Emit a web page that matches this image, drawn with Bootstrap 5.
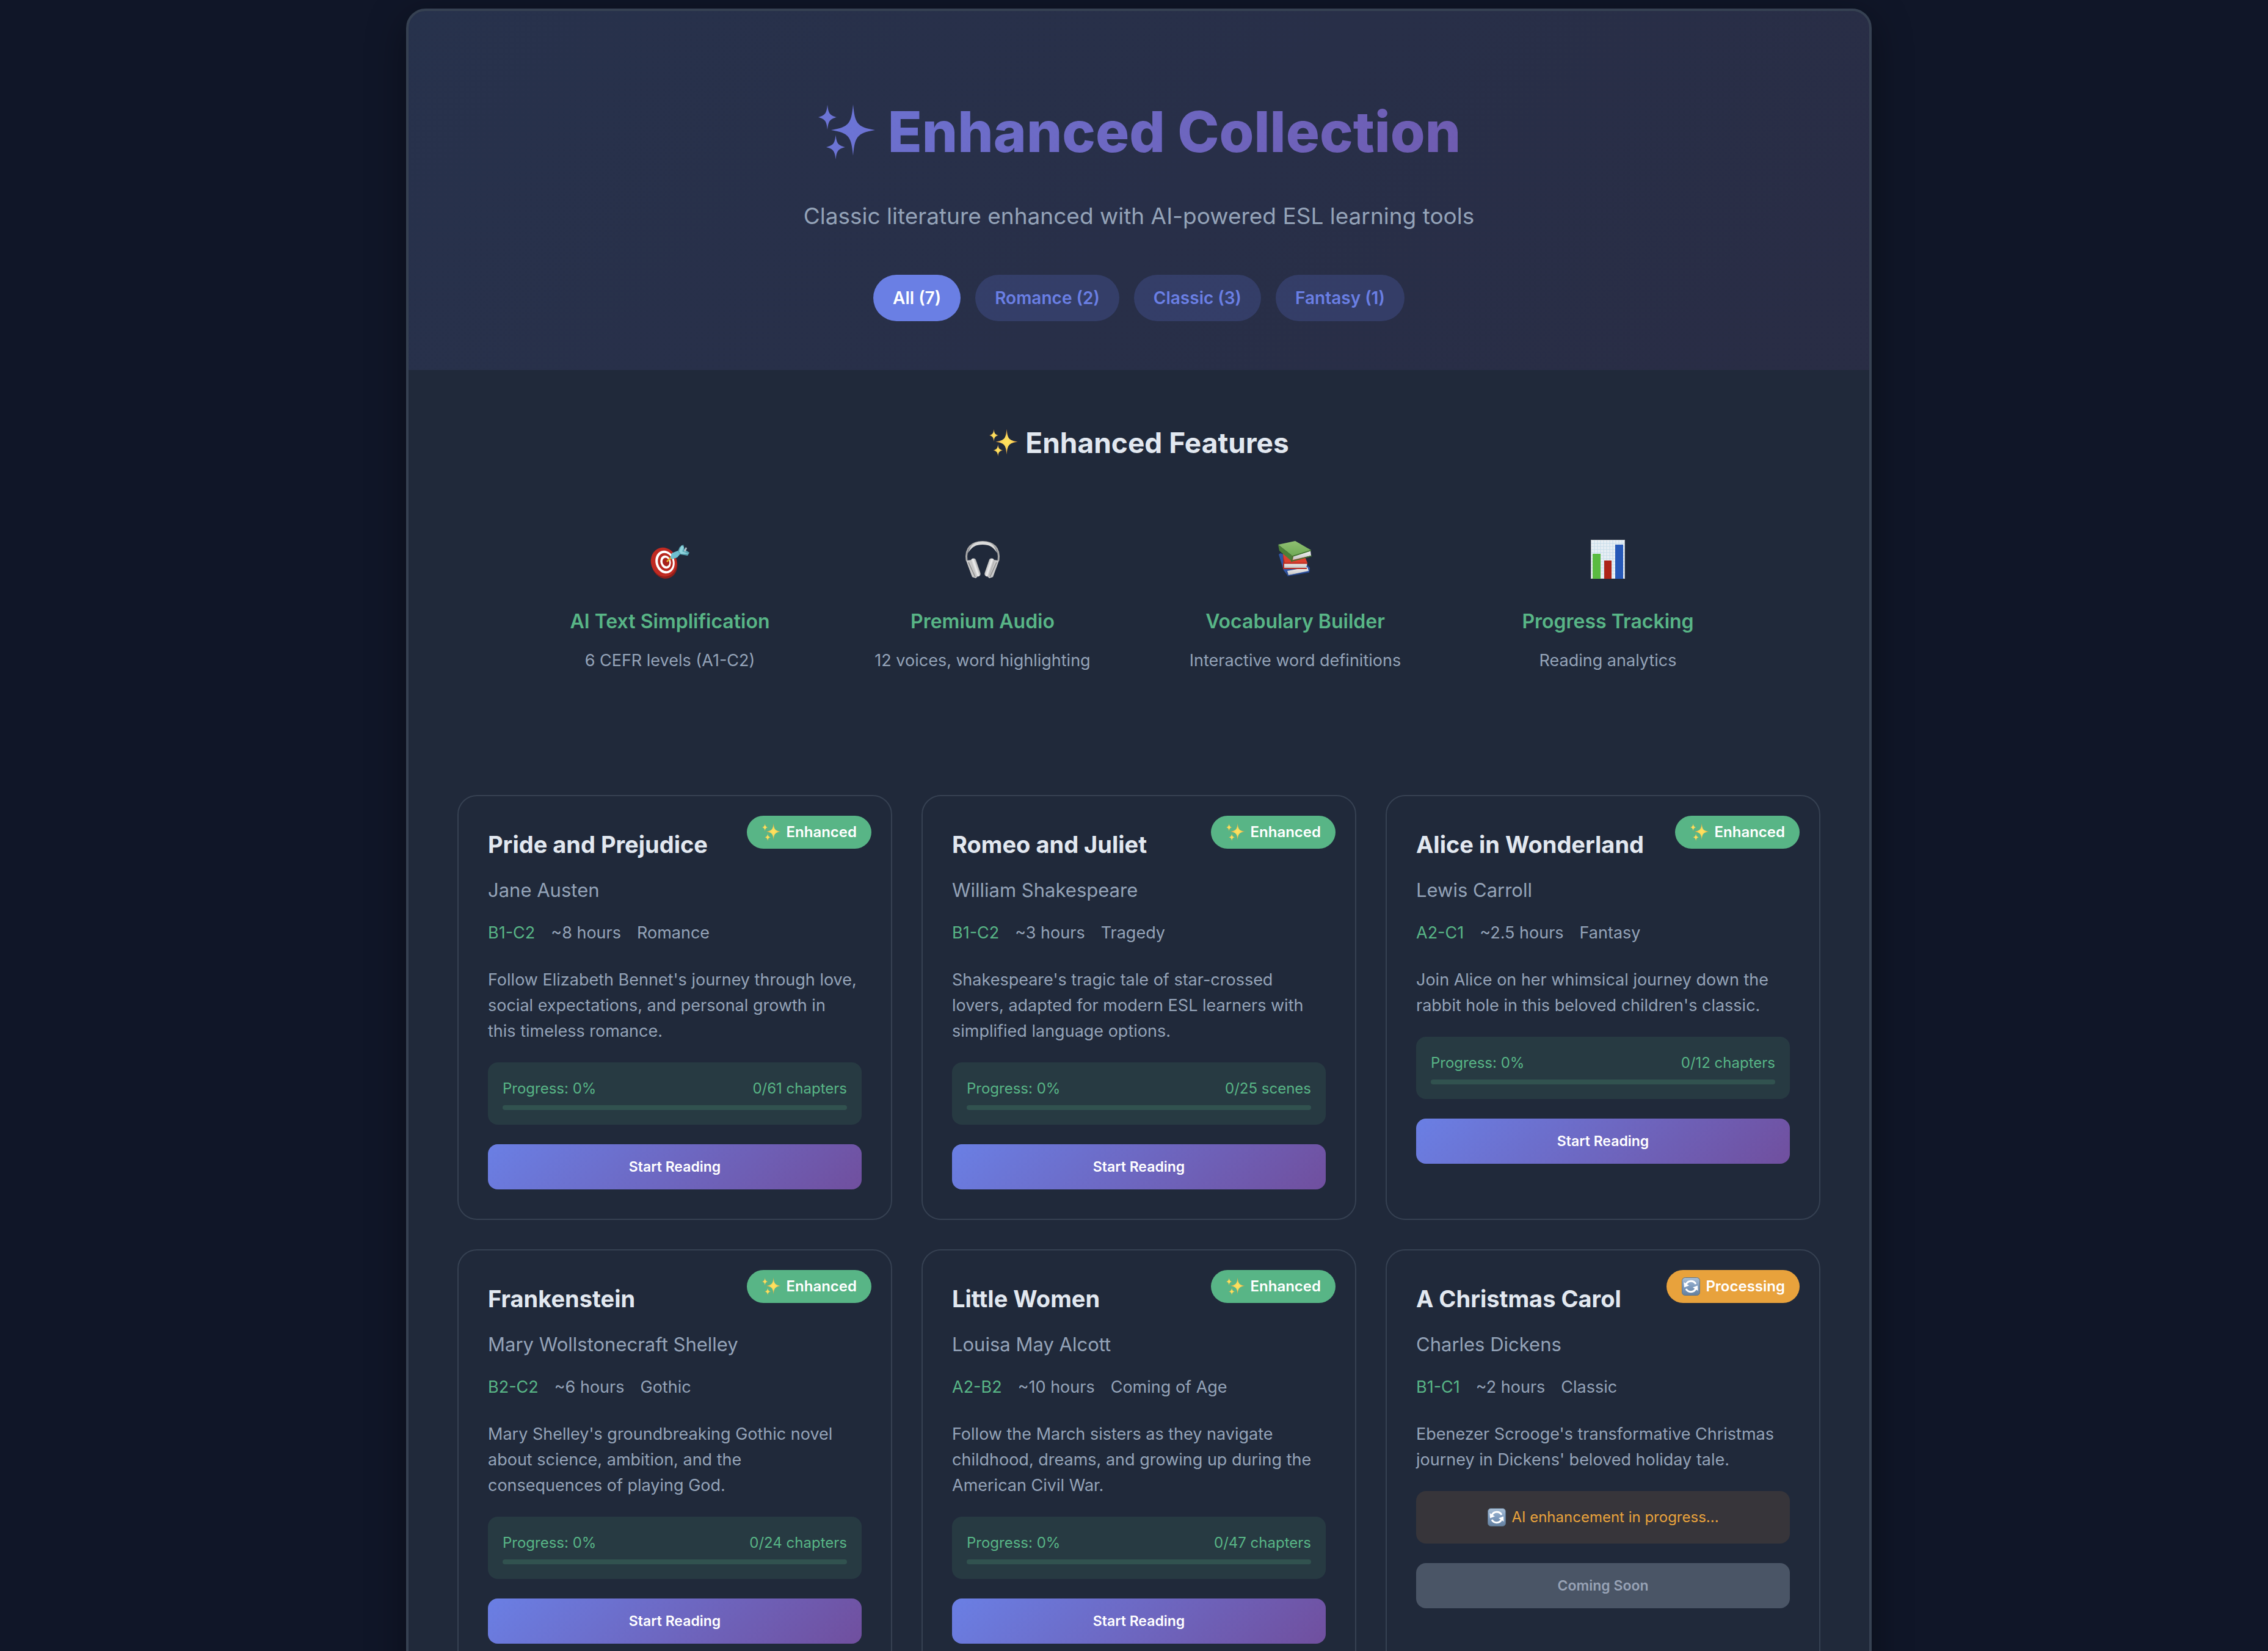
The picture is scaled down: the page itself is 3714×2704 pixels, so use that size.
<!DOCTYPE html>
<html lang="en">
<head>
<meta charset="utf-8">
<meta name="viewport" content="width=device-width, initial-scale=1">
<title>Enhanced Collection</title>
<link rel="stylesheet" href="https://cdn.jsdelivr.net/npm/bootstrap@5.3.0/dist/css/bootstrap.min.css">
<style>
:root{--ink:#e2e8f0;--muted:#94a3b8;--panel:#20293a;--line:#364152;--green:#58b586;--amber:#e8a23c;--blue:#6a7fe4;--violet:#704f9e}
body{background:#101628;color:var(--muted);font-family:Inter,"Liberation Sans",sans-serif;height:100vh;overflow:hidden;padding:14px 0 0 16px}
.shell{max-width:2400px;background:var(--panel);border:4px solid var(--line);border-radius:32px;box-shadow:0 16px 64px rgba(0,0,0,.4);overflow:hidden}
.hero{padding:140px 80px 80px;background:linear-gradient(135deg,rgba(102,126,234,.1),rgba(118,75,162,.1))}
.hero-title{font-size:92px;line-height:116px;font-weight:800;margin-bottom:48px;gap:20px;background:linear-gradient(135deg,var(--blue),var(--violet));-webkit-background-clip:text;background-clip:text;color:transparent}
.hero-title svg{width:96px;height:96px}
.hero-sub{font-size:37px;line-height:64px;margin-bottom:64px}
.pill{border:0;border-radius:40px;padding:20px 32px;font-size:28px;line-height:36px;font-weight:600;color:var(--blue);background:rgba(102,126,234,.2)}
.pill.on{color:#fff;background:var(--blue)}
.section-pad{padding:80px}
.feat-head{font-size:46px;line-height:78px;font-weight:700;color:var(--ink);gap:12px;margin-bottom:120px}
.feat-head svg{width:48px;height:48px}
.feat-grid{max-width:2000px;gap:48px;margin-bottom:198px}
.feat-grid svg{width:64px;height:64px}
.feat-name{font-size:32px;line-height:48px;font-weight:600;color:var(--green);margin:46px 0 18px}
.feat-note{font-size:27px;line-height:44px}
.shelf{display:grid;grid-template-columns:repeat(3,minmax(0,1fr));gap:48px}
.book{border:2px solid var(--line);border-radius:32px;padding:48px}
.tag{top:32px;right:32px;border-radius:27px;padding:8px 24px;font-size:24px;line-height:38px;font-weight:600;color:#fff;background:var(--green);gap:8px}
.tag.wait{background:var(--amber)}
.tag svg,.queue svg{width:32px;height:32px}
.book-title{font-size:38px;line-height:62px;font-weight:700;color:var(--ink);margin-bottom:20px}
.author{font-size:31px;line-height:48px;margin-bottom:24px}
.facts{font-size:27px;line-height:44px;gap:26px;margin-bottom:34px}
.level{color:var(--green)}
.blurb{font-size:27px;line-height:42px;margin-bottom:30px}
.meter,.queue{border-radius:16px;padding:24px;font-size:24px;line-height:38px;margin-bottom:32px}
.meter{background:rgba(88,181,134,.12);color:var(--green)}
.queue{background:#37353a;color:var(--amber);gap:8px}
.track{height:8px;border-radius:4px;background:rgba(88,181,134,.2);margin-top:8px}
.go{border:0;border-radius:16px;padding:24px;font-size:23px;line-height:26px;font-weight:600;color:#fff;background:linear-gradient(135deg,var(--blue),var(--violet))}
.go:disabled{background:#4a5566;color:#97a2b5}
</style>
<script src="https://cdn.jsdelivr.net/npm/bootstrap@5.3.0/dist/js/bootstrap.bundle.min.js"></script>
</head>
<body>
<svg class="position-absolute" width="0" height="0" aria-hidden="true">
  <defs>
    <linearGradient id="gHero" x1="0" y1="0" x2="1" y2="1"><stop offset="0" stop-color="#6b77d9"/><stop offset="1" stop-color="#6c70d0"/></linearGradient>
    <radialGradient id="gGold"><stop offset="0" stop-color="#ffe45e"/><stop offset=".45" stop-color="#fbd75a"/><stop offset="1" stop-color="#d98f3c"/></radialGradient>
    <linearGradient id="gSync" x1="0" y1="0" x2="0" y2="1"><stop offset="0" stop-color="#a9bfd6"/><stop offset=".5" stop-color="#7f9cbf"/><stop offset="1" stop-color="#64809f"/></linearGradient>
    <linearGradient id="gCup" x1="0" y1="0" x2="1" y2="0"><stop offset="0" stop-color="#bdbdbd"/><stop offset=".5" stop-color="#f0f0f0"/><stop offset="1" stop-color="#a9a9a9"/></linearGradient>
    <linearGradient id="gLeaf" x1="0" y1="0" x2="0" y2="1"><stop offset="0" stop-color="#8fc071"/><stop offset="1" stop-color="#6fa955"/></linearGradient>
    <linearGradient id="gPage" x1="0" y1="0" x2="0" y2="1"><stop offset="0" stop-color="#f5f5f5"/><stop offset="1" stop-color="#c3c3c3"/></linearGradient>
  </defs>
  <symbol id="sparkles" viewBox="0 0 96 96">
    <path d="M59 3C62 34 65 40 95 45C65 50 62 56 59 87C56 56 53 50 23 45C53 40 56 34 59 3Z"/>
    <path d="M17 3.500C18.500 18 21 21 32 24C21 27 18.500 30 17 44.500C15.500 30 13 27 2 24C13 21 15.500 18 17 3.500Z"/>
    <path d="M30.500 53C32 67 34.500 70 46 73C34.500 76 32 79 30.500 93C29 79 26.500 76 15 73C26.500 70 29 67 30.500 53Z"/>
  </symbol>
  <symbol id="sync" viewBox="0 0 32 32">
    <rect x="1.500" y="1.500" width="29" height="29" rx="5" fill="url(#gSync)" stroke="#5f7488"/>
    <g fill="none" stroke="#fff" stroke-width="3"><path d="M8 12.500A9 9 0 0 1 24 12"/><path d="M24 19.500A9 9 0 0 1 8 20"/></g>
    <path fill="#fff" d="M4.500 9L5 17.500L13 14.500ZM27.500 23L27 14.500L19 17.500Z"/>
  </symbol>
</svg>

<main class="shell mx-auto">
  <header class="hero text-center">
    <h1 class="hero-title d-flex justify-content-center align-items-center"><svg fill="url(#gHero)" aria-hidden="true"><use href="#sparkles"/></svg>Enhanced Collection</h1>
    <p class="hero-sub">Classic literature enhanced with AI-powered ESL learning tools</p>
    <div class="d-flex justify-content-center gap-4">
      <button type="button" class="pill on">All (7)</button>
      <button type="button" class="pill">Romance (2)</button>
      <button type="button" class="pill">Classic (3)</button>
      <button type="button" class="pill">Fantasy (1)</button>
    </div>
  </header>

  <div class="section-pad">
    <h2 class="feat-head d-flex justify-content-center align-items-center"><svg fill="url(#gGold)" aria-hidden="true"><use href="#sparkles"/></svg>Enhanced Features</h2>
    <div class="feat-grid d-flex mx-auto text-center">
      <div class="flex-fill w-25">
        <svg class="d-block mx-auto" viewBox="0 0 64 64" aria-hidden="true">
          <ellipse cx="23" cy="39" rx="21" ry="25" transform="rotate(-16 23 39)" fill="#8f1f1a"/>
          <ellipse cx="22" cy="36.500" rx="21" ry="24" transform="rotate(-16 22 36.500)" fill="#c02a22"/>
          <ellipse cx="24" cy="36.500" rx="15.500" ry="19" transform="rotate(-16 24 36.500)" fill="#fff"/>
          <ellipse cx="24.500" cy="36.500" rx="12" ry="15" transform="rotate(-16 24.500 36.500)" fill="#b8281f"/>
          <ellipse cx="25" cy="36.500" rx="8.500" ry="11" transform="rotate(-16 25 36.500)" fill="#fff"/>
          <ellipse cx="25.500" cy="36.500" rx="5.500" ry="7" transform="rotate(-16 25.500 36.500)" fill="#a8221c"/>
          <path d="M27 36L36 27" stroke="#e3b62d" stroke-width="2.500"/>
          <path d="M33 29L35 22L45 18L50 22L44 29L35 32Z" fill="#6fc0cf"/>
          <path d="M45 19L48 12L54 8L56 16L64 21L61 26L49 24Z" fill="#5aa7b5"/>
          <path d="M47 19L51 9L55 12L52 19L62 23L50 23Z" fill="#8fd5de"/><path d="M55 18L58 12L60 14L57 20Z" fill="#b8c4cc"/>
        </svg>
        <h3 class="feat-name">AI Text Simplification</h3><p class="feat-note mb-0">6 CEFR levels (A1-C2)</p>
      </div>
      <div class="flex-fill w-25">
        <svg class="d-block mx-auto" viewBox="0 0 64 64" aria-hidden="true">
          <path d="M6 34C3 13 15 3.500 32 3.500S61 13 58 34" fill="none" stroke="#a8a8a8" stroke-width="3"/>
          <path d="M8 22C12 8 20 3 32 3S52 8 56 22C49 11 43 8 32 8S15 11 8 22Z" fill="#dadada"/>
          <path d="M5 34L14 33L24 60L21 63L15 61Z" fill="#c9c9c9"/><path d="M59 34L50 33L40 60L43 63L49 61Z" fill="#c9c9c9"/>
          <rect x="16" y="30" width="9" height="31" rx="4.500" transform="rotate(-19 20 45)" fill="url(#gCup)"/>
          <rect x="39" y="30" width="9" height="31" rx="4.500" transform="rotate(19 44 45)" fill="url(#gCup)"/>
          <path d="M9 37L20 61M55 37L44 61" stroke="#8d8d8d" stroke-width="1.500"/>
        </svg>
        <h3 class="feat-name">Premium Audio</h3><p class="feat-note mb-0">12 voices, word highlighting</p>
      </div>
      <div class="flex-fill w-25">
        <svg class="d-block mx-auto" viewBox="0 0 64 64" aria-hidden="true">
          <path d="M5 24L8 22L50 40L56 46L55 53L20 59L13 50Z" fill="#2f55a5"/>
          <path d="M19 51L52 45L54 51L21 58Z" fill="url(#gPage)"/><path d="M18 52L20 59L55 53" fill="none" stroke="#27468c" stroke-width="1.500"/>
          <path d="M12 23L48 28L52 38L13 39Z" fill="#dc4030"/><path d="M12 24L13 48L17 46L15 39Z" fill="#a52920"/>
          <path d="M14 39L52 38L50 46L14 46Z" fill="url(#gPage)"/><path d="M52 38.500H13V47H51" fill="none" stroke="#b92e24" stroke-width="1.800"/>
          <path d="M4 8L32 2L58 17L28 27Z" fill="url(#gLeaf)"/><path d="M4 8L28 27L26 35L6 18Z" fill="#4b7f38"/>
          <path d="M29 27L57 18L58 26L28 33Z" fill="url(#gPage)"/><path d="M58 17.500L28 27L26 35L59 26.500" fill="none" stroke="#417330" stroke-width="1.800"/>
        </svg>
        <h3 class="feat-name">Vocabulary Builder</h3><p class="feat-note mb-0">Interactive word definitions</p>
      </div>
      <div class="flex-fill w-25">
        <svg class="d-block mx-auto" viewBox="0 0 64 64" aria-hidden="true">
          <rect x="4" width="56" height="64" fill="#eaf0f5"/>
          <path d="M5 6H59M5 11H59M5 16H59M5 21H59M5 26H59M5 31H59M5 36H59M5 41H59M5 46H59M5 51H59M5 56H59M10 1V63M15 1V63M20 1V63M25 1V63M30 1V63M35 1V63M40 1V63M45 1V63M50 1V63M55 1V63" stroke="#c6dcea"/>
          <rect x="4.500" y=".5" width="55" height="63" fill="none" stroke="#b9bcc2"/>
          <rect x="7" y="23" width="13" height="41" fill="#5abb41"/><rect x="26" y="34" width="12" height="30" fill="#ad2418"/><rect x="44" y="8" width="13" height="56" fill="#2759b8"/>
        </svg>
        <h3 class="feat-name">Progress Tracking</h3><p class="feat-note mb-0">Reading analytics</p>
      </div>
    </div>

    <div class="shelf">
      <article class="book position-relative">
        <span class="tag position-absolute d-flex align-items-center"><svg fill="url(#gGold)" aria-hidden="true"><use href="#sparkles"/></svg>Enhanced</span>
        <h3 class="book-title">Pride and Prejudice</h3>
        <p class="author">Jane Austen</p>
        <div class="facts d-flex"><span class="level">B1-C2</span><span>~8 hours</span><span>Romance</span></div>
        <p class="blurb">Follow Elizabeth Bennet's journey through love, social expectations, and personal growth in this&nbsp;timeless romance.</p>
        <div class="meter"><div class="d-flex justify-content-between"><span>Progress: 0%</span><span>0/61 chapters</span></div><div class="track"></div></div>
        <button type="button" class="go d-block w-100">Start Reading</button>
      </article>
      <article class="book position-relative">
        <span class="tag position-absolute d-flex align-items-center"><svg fill="url(#gGold)" aria-hidden="true"><use href="#sparkles"/></svg>Enhanced</span>
        <h3 class="book-title">Romeo and Juliet</h3>
        <p class="author">William Shakespeare</p>
        <div class="facts d-flex"><span class="level">B1-C2</span><span>~3 hours</span><span>Tragedy</span></div>
        <p class="blurb">Shakespeare's tragic tale of star-crossed lovers, adapted for modern ESL learners with simplified language options.</p>
        <div class="meter"><div class="d-flex justify-content-between"><span>Progress: 0%</span><span>0/25 scenes</span></div><div class="track"></div></div>
        <button type="button" class="go d-block w-100">Start Reading</button>
      </article>
      <article class="book position-relative">
        <span class="tag position-absolute d-flex align-items-center"><svg fill="url(#gGold)" aria-hidden="true"><use href="#sparkles"/></svg>Enhanced</span>
        <h3 class="book-title">Alice in Wonderland</h3>
        <p class="author">Lewis Carroll</p>
        <div class="facts d-flex"><span class="level">A2-C1</span><span>~2.5 hours</span><span>Fantasy</span></div>
        <p class="blurb">Join Alice on her whimsical journey down the rabbit hole in this beloved children's classic.</p>
        <div class="meter"><div class="d-flex justify-content-between"><span>Progress: 0%</span><span>0/12 chapters</span></div><div class="track"></div></div>
        <button type="button" class="go d-block w-100">Start Reading</button>
      </article>
      <article class="book position-relative">
        <span class="tag position-absolute d-flex align-items-center"><svg fill="url(#gGold)" aria-hidden="true"><use href="#sparkles"/></svg>Enhanced</span>
        <h3 class="book-title">Frankenstein</h3>
        <p class="author">Mary Wollstonecraft Shelley</p>
        <div class="facts d-flex"><span class="level">B2-C2</span><span>~6 hours</span><span>Gothic</span></div>
        <p class="blurb">Mary Shelley's groundbreaking Gothic novel about science, ambition, and the consequences&nbsp;of playing God.</p>
        <div class="meter"><div class="d-flex justify-content-between"><span>Progress: 0%</span><span>0/24 chapters</span></div><div class="track"></div></div>
        <button type="button" class="go d-block w-100">Start Reading</button>
      </article>
      <article class="book position-relative">
        <span class="tag position-absolute d-flex align-items-center"><svg fill="url(#gGold)" aria-hidden="true"><use href="#sparkles"/></svg>Enhanced</span>
        <h3 class="book-title">Little Women</h3>
        <p class="author">Louisa May Alcott</p>
        <div class="facts d-flex"><span class="level">A2-B2</span><span>~10 hours</span><span>Coming of Age</span></div>
        <p class="blurb">Follow the March sisters as they navigate childhood, dreams, and growing up during the American Civil War.</p>
        <div class="meter"><div class="d-flex justify-content-between"><span>Progress: 0%</span><span>0/47 chapters</span></div><div class="track"></div></div>
        <button type="button" class="go d-block w-100">Start Reading</button>
      </article>
      <article class="book position-relative">
        <span class="tag wait position-absolute d-flex align-items-center"><svg aria-hidden="true"><use href="#sync"/></svg>Processing</span>
        <h3 class="book-title">A Christmas Carol</h3>
        <p class="author">Charles Dickens</p>
        <div class="facts d-flex"><span class="level">B1-C1</span><span>~2 hours</span><span>Classic</span></div>
        <p class="blurb">Ebenezer Scrooge's transformative Christmas journey in Dickens' beloved holiday tale.</p>
        <div class="queue d-flex justify-content-center align-items-center"><svg aria-hidden="true"><use href="#sync"/></svg>AI enhancement in progress...</div>
        <button type="button" class="go d-block w-100" disabled>Coming Soon</button>
      </article>
    </div>
  </div>
</main>
</body>
</html>
